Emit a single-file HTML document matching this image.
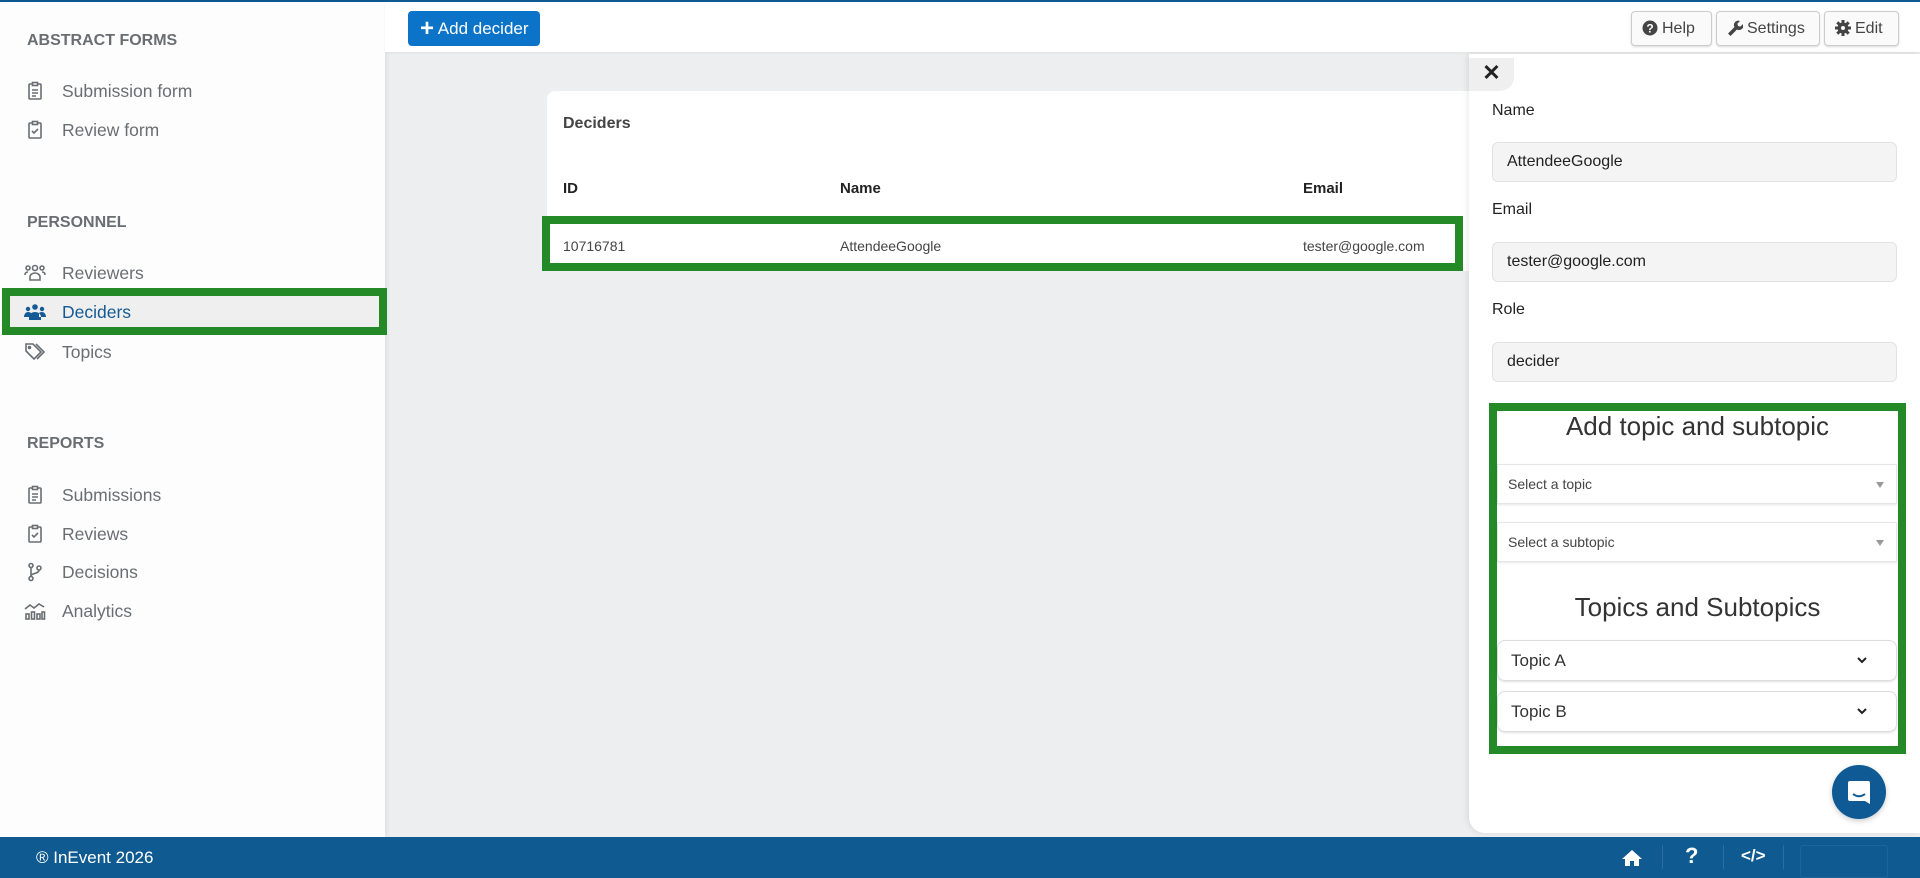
<!DOCTYPE html>
<html><head><meta charset="utf-8"><style>
*{box-sizing:border-box;margin:0;padding:0}
body{width:1920px;height:878px;overflow:hidden;background:#eceeef;font-family:"Liberation Sans",sans-serif;position:relative;color:#333}
.abs{position:absolute}
.topline{left:0;top:0;width:1920px;height:2px;background:#0e5a92}
.side{left:0;top:2px;width:385px;height:835px;background:#fdfdfd;box-shadow:2px 0 4px rgba(0,0,0,.06)}
.sec{position:absolute;left:27px;font-size:16px;font-weight:bold;color:#6a6e72}
.it{position:absolute;left:62px;font-size:17.5px;color:#6a6e72;line-height:20px}
.ic{position:absolute;left:25px;width:20px;height:20px}
.header{left:385px;top:2px;width:1535px;height:50px;background:#fff;box-shadow:0 1px 3px rgba(0,0,0,.05)}
.btn{position:absolute;top:9px;height:35px;border:1px solid #ccc;border-radius:4px;background:#fafafa;font-size:16px;color:#444;line-height:33px;padding:0 10px;white-space:nowrap;box-shadow:0 1px 2px rgba(0,0,0,.15)}
.btn svg{vertical-align:-3px;margin-right:4px}
.card{left:547px;top:91px;width:940px;height:180px;background:#fff;border-radius:8px}
.lbl{position:absolute;left:1492px;font-size:16px;color:#222}
.inp{position:absolute;left:1492px;width:405px;height:40px;background:#f4f4f4;border:1px solid #e2e2e2;border-radius:6px;font-size:16px;color:#222;padding-left:14px;line-height:38px}
.sel{position:absolute;left:1497px;width:400px;height:40px;background:#fff;border:1px solid #e6e6e6;box-shadow:0 1px 2px rgba(0,0,0,.1);font-size:14px;color:#444;padding-left:10px;line-height:38px}
.sel:after{content:"";position:absolute;right:12px;top:17px;border-left:4px solid transparent;border-right:4px solid transparent;border-top:6px solid #999}
.acc{position:absolute;left:1497px;width:400px;height:41px;background:#fff;border:1px solid #ddd;border-radius:8px;box-shadow:0 1px 2px rgba(0,0,0,.12);font-size:17px;color:#333;padding-left:13px;line-height:39px}
.acc svg{position:absolute;right:28px;top:15px}
.foot{left:0;top:837px;width:1920px;height:41px;background:#0e5a91;color:#fff}
</style></head><body>
<div class="abs topline"></div>
<div class="abs side">
 <div class="sec" style="top:30px">ABSTRACT FORMS</div>
 <svg class="ic" style="top:79px" viewBox="0 0 20 20" fill="none" stroke="#6a6e72" stroke-width="1.6"><rect x="4" y="3" width="12" height="15" rx="1"/><rect x="7.5" y="1.5" width="5" height="3" fill="#fff"/><path d="M7 9h6M7 12h6M7 15h4"/></svg>
 <div class="it" style="top:79px">Submission form</div>
 <svg class="ic" style="top:118px" viewBox="0 0 20 20" fill="none" stroke="#6a6e72" stroke-width="1.6"><rect x="4" y="3" width="12" height="15" rx="1"/><rect x="7.5" y="1.5" width="5" height="3" fill="#fff"/><path d="M7 11l2 2 4-4"/></svg>
 <div class="it" style="top:118px">Review form</div>
 <div class="sec" style="top:212px">PERSONNEL</div>
 <svg class="ic" style="top:261px;width:22px;left:24px" viewBox="0 0 22 20" fill="none" stroke="#6a6e72" stroke-width="1.6"><circle cx="4" cy="5" r="2"/><circle cx="11" cy="5" r="2.5"/><circle cx="18" cy="5" r="2"/><path d="M1 12c0-2 1-3 3-3M21 12c0-2-1-3-3-3M6 17v-3c0-2 2-4 5-4s5 2 5 4v3z"/></svg>
 <div class="it" style="top:261px">Reviewers</div>
 <div style="position:absolute;left:2px;top:286px;width:385px;height:47px;border:8px solid #238a27;background:#efefef"></div>
 <svg class="ic" style="top:300px;width:22px;left:24px" viewBox="0 0 22 20" fill="#155a94"><circle cx="4" cy="7" r="2.2"/><circle cx="11" cy="5" r="2.8"/><circle cx="18" cy="7" r="2.2"/><path d="M0 15c0-3 2-5 4-5s3 1 3 1v4zM22 15c0-3-2-5-4-5s-3 1-3 1v4zM5 18v-3c0-3 3-5 6-5s6 2 6 5v3z"/></svg>
 <div class="it" style="top:300px;color:#155a94">Deciders</div>
 <svg class="ic" style="top:340px;width:22px;left:24px" viewBox="0 0 22 20" fill="none" stroke="#6a6e72" stroke-width="1.6"><path d="M2 2h7l8 8-7 7-8-8z"/><path d="M12 2l8 8-7 7"/><circle cx="5.5" cy="5.5" r="1"/></svg>
 <div class="it" style="top:340px">Topics</div>
 <div class="sec" style="top:433px">REPORTS</div>
 <svg class="ic" style="top:483px" viewBox="0 0 20 20" fill="none" stroke="#6a6e72" stroke-width="1.6"><rect x="4" y="3" width="12" height="15" rx="1"/><rect x="7.5" y="1.5" width="5" height="3" fill="#fff"/><path d="M7 9h6M7 12h6M7 15h4"/></svg>
 <div class="it" style="top:483px">Submissions</div>
 <svg class="ic" style="top:522px" viewBox="0 0 20 20" fill="none" stroke="#6a6e72" stroke-width="1.6"><rect x="4" y="3" width="12" height="15" rx="1"/><rect x="7.5" y="1.5" width="5" height="3" fill="#fff"/><path d="M7 11l2 2 4-4"/></svg>
 <div class="it" style="top:522px">Reviews</div>
 <svg class="ic" style="top:560px" viewBox="0 0 20 20" fill="none" stroke="#6a6e72" stroke-width="1.6"><circle cx="6" cy="3.5" r="2"/><circle cx="6" cy="16.5" r="2"/><circle cx="14" cy="6" r="2"/><path d="M6 5.5v9M14 8c0 4-8 3-8 6"/></svg>
 <div class="it" style="top:560px">Decisions</div>
 <svg class="ic" style="top:599px;width:22px;left:24px" viewBox="0 0 22 20" fill="none" stroke="#6a6e72" stroke-width="1.6"><path d="M1 8l5-4 4 3 5-4 5 3"/><rect x="2" y="13" width="3" height="5"/><rect x="7.5" y="11" width="3" height="7"/><rect x="13" y="13" width="3" height="5"/><rect x="18" y="11" width="2.5" height="7"/></svg>
 <div class="it" style="top:599px">Analytics</div>
</div>
<div class="abs header">
 <div style="position:absolute;left:23px;top:9px;width:132px;height:35px;background:#0b73c8;border-radius:4px;color:#fff;font-size:17px;line-height:35px;padding-left:12px;white-space:nowrap"><span style="font-size:24px;font-weight:bold;vertical-align:-2px">+</span> Add decider</div>
 <div class="btn" style="left:1246px;width:81px"><svg width="16" height="16" viewBox="0 0 16 16"><circle cx="8" cy="8" r="7.5" fill="#444"/><text x="8" y="12.5" font-size="12" font-weight="bold" fill="#fafafa" text-anchor="middle" font-family="Liberation Sans">?</text></svg>Help</div>
 <div class="btn" style="left:1331px;width:104px"><svg width="16" height="16" viewBox="0 0 16 16"><path d="M1 13.5l6.5-6.5a4.3 4.3 0 0 1 5.5-6l-2.6 2.6.6 2.4 2.4.6L16 4a4.3 4.3 0 0 1-6 5.5L3.5 16z" fill="#444"/></svg>Settings</div>
 <div class="btn" style="left:1439px;width:75px"><svg width="16" height="16" viewBox="0 0 16 16"><circle cx="8" cy="8" r="5.5" fill="#444"/><path d="M8 0v16M0 8h16M2.3 2.3l11.4 11.4M13.7 2.3L2.3 13.7" stroke="#444" stroke-width="3"/><circle cx="8" cy="8" r="2" fill="#fafafa"/></svg>Edit</div>
</div>
<div class="abs card">
 <div style="position:absolute;left:16px;top:24px;font-size:16px;font-weight:bold;color:#444">Deciders</div>
 <div style="position:absolute;left:16px;top:89px;font-size:15px;font-weight:bold;color:#222">ID</div>
 <div style="position:absolute;left:293px;top:89px;font-size:15px;font-weight:bold;color:#222">Name</div>
 <div style="position:absolute;left:756px;top:89px;font-size:15px;font-weight:bold;color:#222">Email</div>
</div>
<div class="abs" style="left:542px;top:216px;width:921px;height:55px;border:8px solid #238a27;background:#fff"></div>
<div class="abs" style="left:563px;top:238px;font-size:14px;color:#444">10716781</div>
<div class="abs" style="left:840px;top:238px;font-size:14px;color:#444">AttendeeGoogle</div>
<div class="abs" style="left:1303px;top:238px;font-size:14px;color:#444">tester@google.com</div>
<div class="abs" style="left:1469px;top:54px;width:451px;height:779px;background:#fff;border-radius:0 0 0 16px;box-shadow:-2px 0 6px rgba(0,0,0,.08)"></div>
<div class="abs" style="left:1469px;top:58px;width:45px;height:33px;background:#efefef;border-radius:0 0 14px 0;font-size:22px;font-weight:bold;color:#222;text-align:center;line-height:30px">&#x2715;</div>
<div class="lbl" style="top:102px">Name</div>
<div class="inp" style="top:142px">AttendeeGoogle</div>
<div class="lbl" style="top:201px">Email</div>
<div class="inp" style="top:242px">tester@google.com</div>
<div class="lbl" style="top:301px">Role</div>
<div class="inp" style="top:342px">decider</div>
<div class="abs" style="left:1489px;top:403px;width:417px;height:351px;border:8px solid #238a27"></div>
<div class="abs" style="left:1497px;top:411px;width:401px;text-align:center;font-size:26px;color:#333">Add topic and subtopic</div>
<div class="sel" style="top:464px">Select a topic</div>
<div class="sel" style="top:522px">Select a subtopic</div>
<div class="abs" style="left:1497px;top:592px;width:401px;text-align:center;font-size:26px;color:#333">Topics and Subtopics</div>
<div class="acc" style="top:640px">Topic A<svg width="12" height="8" viewBox="0 0 12 8"><path d="M2 2l4 4 4-4" stroke="#222" stroke-width="2" fill="none"/></svg></div>
<div class="acc" style="top:691px">Topic B<svg width="12" height="8" viewBox="0 0 12 8"><path d="M2 2l4 4 4-4" stroke="#222" stroke-width="2" fill="none"/></svg></div>
<div class="abs" style="left:1832px;top:765px;width:54px;height:54px;border-radius:50%;background:#0f5a94;box-shadow:0 2px 6px rgba(0,0,0,.2)"><svg width="54" height="54" viewBox="0 0 54 54"><path d="M18 16h18a2 2 0 0 1 2 2v21l-5-3H18a2 2 0 0 1-2-2V18a2 2 0 0 1 2-2z" fill="#fff"/><path d="M21 29c4 3 8 3 12 0" stroke="#0f5a94" stroke-width="2" fill="none"/></svg></div>
<div class="abs foot">
 <div style="position:absolute;left:36px;top:11px;font-size:17px">® InEvent 2026</div>
 <svg style="position:absolute;left:1622px;top:12px" width="20" height="18" viewBox="0 0 20 18"><path d="M10 1L0 10h3v7h5v-5h4v5h5v-7h3z" fill="#fff"/></svg>
 <div style="position:absolute;left:1662px;top:8px;width:1px;height:24px;background:#2b6ea3"></div>
 <div style="position:absolute;left:1685px;top:6px;font-size:22px;font-weight:bold">?</div>
 <div style="position:absolute;left:1723px;top:8px;width:1px;height:24px;background:#2b6ea3"></div>
 <div style="position:absolute;left:1741px;top:9px;font-size:17px;font-weight:bold">&lt;/&gt;</div>
 <div style="position:absolute;left:1783px;top:8px;width:1px;height:24px;background:#2b6ea3"></div>
 <div style="position:absolute;left:1800px;top:8px;width:88px;height:33px;border:1px solid #1f649b;border-radius:3px"></div>
</div>
</body></html>
